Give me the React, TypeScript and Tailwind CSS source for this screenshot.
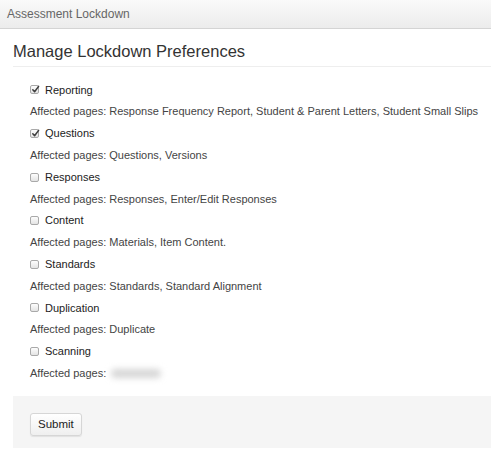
const prefs = [
  { name: "Reporting", checked: true, pages: "Response Frequency Report, Student & Parent Letters, Student Small Slips" },
  { name: "Questions", checked: true, pages: "Questions, Versions" },
  { name: "Responses", checked: false, pages: "Responses, Enter/Edit Responses" },
  { name: "Content", checked: false, pages: "Materials, Item Content." },
  { name: "Standards", checked: false, pages: "Standards, Standard Alignment" },
  { name: "Duplication", checked: false, pages: "Duplicate" },
  { name: "Scanning", checked: false, pages: "" },
];

function Box({ checked }: { checked: boolean }) {
  return (
    <span className="mr-[6px] grid h-[9px] w-[9px] place-items-center rounded-[2px] border border-[#a9a9a9] bg-gradient-to-b from-[#fdfdfd] to-[#e4e4e4]">
      {checked && (
        <svg width="9" height="9" viewBox="0 0 9 9" className="-mt-[1px]">
          <path d="M1.8 4.8 L3.6 6.8 L7.6 1.4" fill="none" stroke="#3d3d3d" strokeWidth="1.5" strokeLinecap="round" strokeLinejoin="round" />
        </svg>
      )}
    </span>
  );
}

export default function App() {
  return (
    <div className="min-h-[450px] w-[491px] bg-white font-['Liberation_Sans',Arial,sans-serif] text-[#333]">
      <header className="flex h-[29px] items-center border-b border-[#d4d4d4] bg-gradient-to-b from-[#fafafa] to-[#ececec] px-[7px] text-[12px] text-[#666]">
        Assessment Lockdown
      </header>
      <div className="pl-[13px]">
        <h1 className="flex h-[38px] items-end border-b border-[#eeeeee] pb-[7px] text-[16.5px] leading-none text-[#333]">Manage Lockdown Preferences</h1>
        <div className="pl-[17px] pt-[12px] text-[11px]">
          {prefs.map((p) => (
            <div key={p.name}>
              <label className="flex h-[21.8px] items-center">
                <Box checked={p.checked} />
                <span className="text-[#222]">{p.name}</span>
              </label>
              <div className="flex h-[21.8px] items-center whitespace-nowrap text-[#444]">
                Affected pages:&nbsp;
                {p.pages ? p.pages : <span className="ml-[2px] inline-block h-[9px] w-[50px] rounded-full bg-[#d6d6d6] blur-[3px]" />}
              </div>
            </div>
          ))}
        </div>
        <div className="mt-[12px] h-[52px] bg-[#f5f5f5] pl-[17px] pt-[15px]">
          <button className="h-[23px] rounded-[3px] border border-[#d6d6d6] bg-gradient-to-b from-white to-[#efefef] px-[7px] text-[11.5px] text-[#222] shadow-[0_1px_1px_rgba(0,0,0,0.08)]">
            Submit
          </button>
        </div>
      </div>
    </div>
  );
}
